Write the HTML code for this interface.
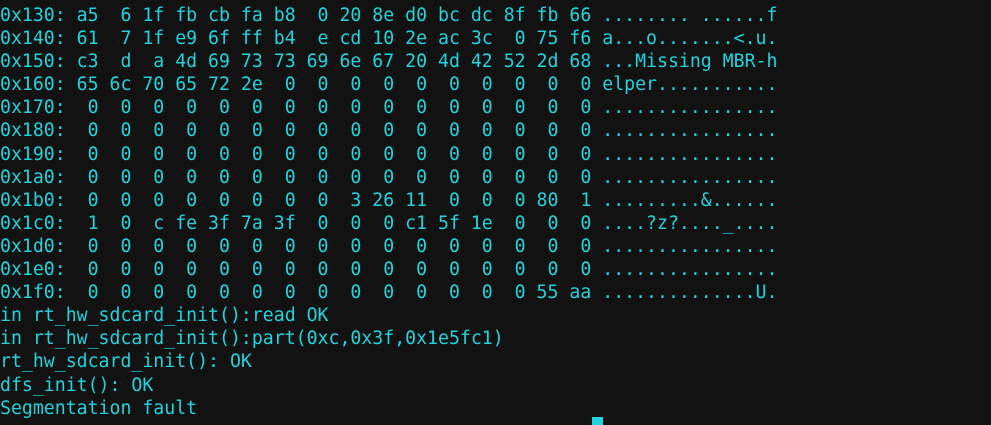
<!DOCTYPE html>
<html><head><meta charset="utf-8"><style>
html,body{margin:0;padding:0;background:#121212;width:991px;height:422px;overflow:hidden}
pre{margin:0;padding:4px 0 0 0;font-family:"DejaVu Sans Mono","Liberation Mono",monospace;font-size:18.2px;line-height:23.1px;color:#22d3dc;white-space:pre}
.cur{position:absolute;left:592px;top:417px;width:11px;height:8px;background:#22d3dc}
</style></head><body><pre>0x130: a5  6 1f fb cb fa b8  0 20 8e d0 bc dc 8f fb 66 ........ ......f
0x140: 61  7 1f e9 6f ff b4  e cd 10 2e ac 3c  0 75 f6 a...o.......&lt;.u.
0x150: c3  d  a 4d 69 73 73 69 6e 67 20 4d 42 52 2d 68 ...Missing MBR-h
0x160: 65 6c 70 65 72 2e  0  0  0  0  0  0  0  0  0  0 elper...........
0x170:  0  0  0  0  0  0  0  0  0  0  0  0  0  0  0  0 ................
0x180:  0  0  0  0  0  0  0  0  0  0  0  0  0  0  0  0 ................
0x190:  0  0  0  0  0  0  0  0  0  0  0  0  0  0  0  0 ................
0x1a0:  0  0  0  0  0  0  0  0  0  0  0  0  0  0  0  0 ................
0x1b0:  0  0  0  0  0  0  0  0  3 26 11  0  0  0 80  1 .........&amp;......
0x1c0:  1  0  c fe 3f 7a 3f  0  0  0 c1 5f 1e  0  0  0 ....?z?...._....
0x1d0:  0  0  0  0  0  0  0  0  0  0  0  0  0  0  0  0 ................
0x1e0:  0  0  0  0  0  0  0  0  0  0  0  0  0  0  0  0 ................
0x1f0:  0  0  0  0  0  0  0  0  0  0  0  0  0  0 55 aa ..............U.
in rt_hw_sdcard_init():read OK
in rt_hw_sdcard_init():part(0xc,0x3f,0x1e5fc1)
rt_hw_sdcard_init(): OK
dfs_init(): OK
Segmentation fault
</pre><div class="cur"></div></body></html>
